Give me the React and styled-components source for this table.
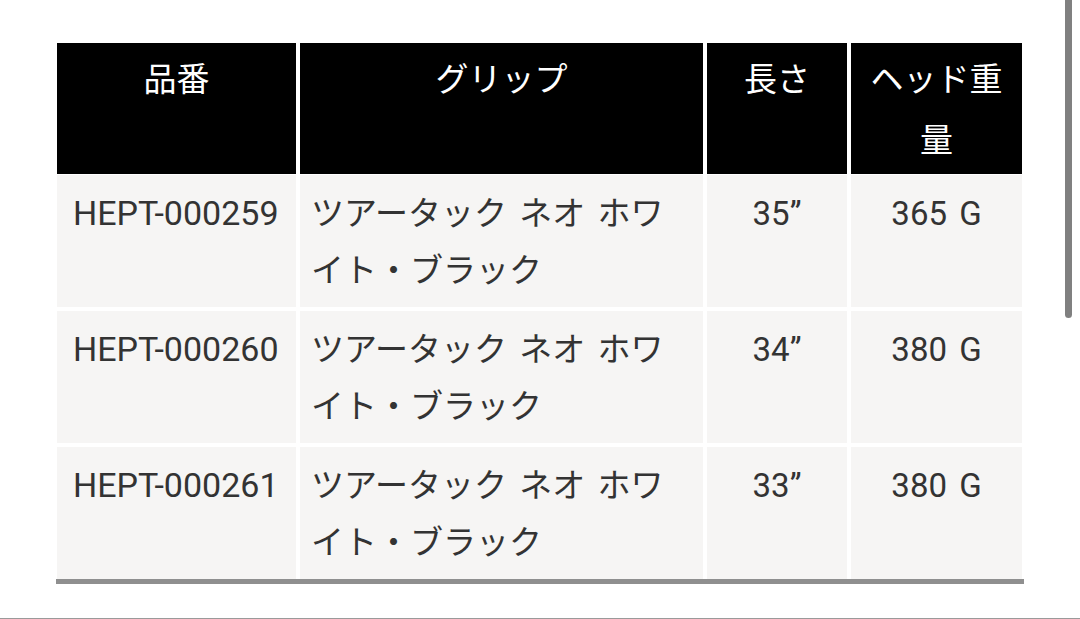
import React from "react";
import styled, { createGlobalStyle } from "styled-components";

const GlobalStyle = createGlobalStyle`
  html, body {
    margin: 0;
    padding: 0;
    background: #ffffff;
  }
  body {
    font-family: Roboto, "Noto Sans CJK JP", sans-serif;
    overflow: hidden;
  }
`;

const COLUMNS = "239px 403px 140px 171px";

const Page = styled.div`
  width: 1080px;
  height: 619px;
  padding-top: 43px;
  box-sizing: border-box;
  display: flex;
  flex-direction: column;
`;

const Table = styled.div`
  margin-left: 56px;
  width: 968px;
  padding-left: 1px;
  box-sizing: border-box;
  display: flex;
  flex-direction: column;
  gap: 4px;
  border-bottom: 5px solid #8f8f8f;
`;

const HeadRow = styled.div`
  display: grid;
  grid-template-columns: ${COLUMNS};
  column-gap: 4px;
  margin-bottom: -3px;
`;

const HeadCell = styled.div`
  background: #000000;
  color: #ffffff;
  font-size: 33px;
  line-height: 61px;
  text-align: center;
  padding: 6px 12px 3px;
  word-break: break-all;
`;

const Row = styled.div`
  display: grid;
  grid-template-columns: ${COLUMNS};
  column-gap: 4px;
`;

const Cell = styled.div`
  background: #f6f5f4;
  color: #333333;
  font-size: ${(p) => (p.$code ? "34px" : "33px")};
  line-height: 57px;
  word-spacing: 4px;
  padding: 10px 16px 8px ${(p) => (p.$code ? "16px" : "11px")};
  text-align: ${(p) => (p.$center ? "center" : "left")};
  ${(p) => p.$center && "padding-right: 0; padding-left: 0;"}
`;

const Divider = styled.div`
  margin-top: auto;
  height: 1px;
  background: #9a9a9a;
`;

const ScrollThumb = styled.div`
  position: fixed;
  top: 0;
  left: 1065px;
  width: 7px;
  height: 318px;
  background: #808080;
  border-radius: 0 0 4px 4px;
`;

const rows = [
  { code: "HEPT-000259", grip: "ツアータック ネオ ホワイト・ブラック", length: "35”", weight: "365 G" },
  { code: "HEPT-000260", grip: "ツアータック ネオ ホワイト・ブラック", length: "34”", weight: "380 G" },
  { code: "HEPT-000261", grip: "ツアータック ネオ ホワイト・ブラック", length: "33”", weight: "380 G" },
];

export default function App() {
  return (
    <>
      <GlobalStyle />
      <Page>
        <Table>
          <HeadRow>
            <HeadCell>品番</HeadCell>
            <HeadCell>グリップ</HeadCell>
            <HeadCell>長さ</HeadCell>
            <HeadCell>ヘッド重量</HeadCell>
          </HeadRow>
          {rows.map((r) => (
            <Row key={r.code}>
              <Cell $code>{r.code}</Cell>
              <Cell>{r.grip}</Cell>
              <Cell $center>{r.length}</Cell>
              <Cell $center>{r.weight}</Cell>
            </Row>
          ))}
        </Table>
        <Divider />
      </Page>
      <ScrollThumb />
    </>
  );
}
